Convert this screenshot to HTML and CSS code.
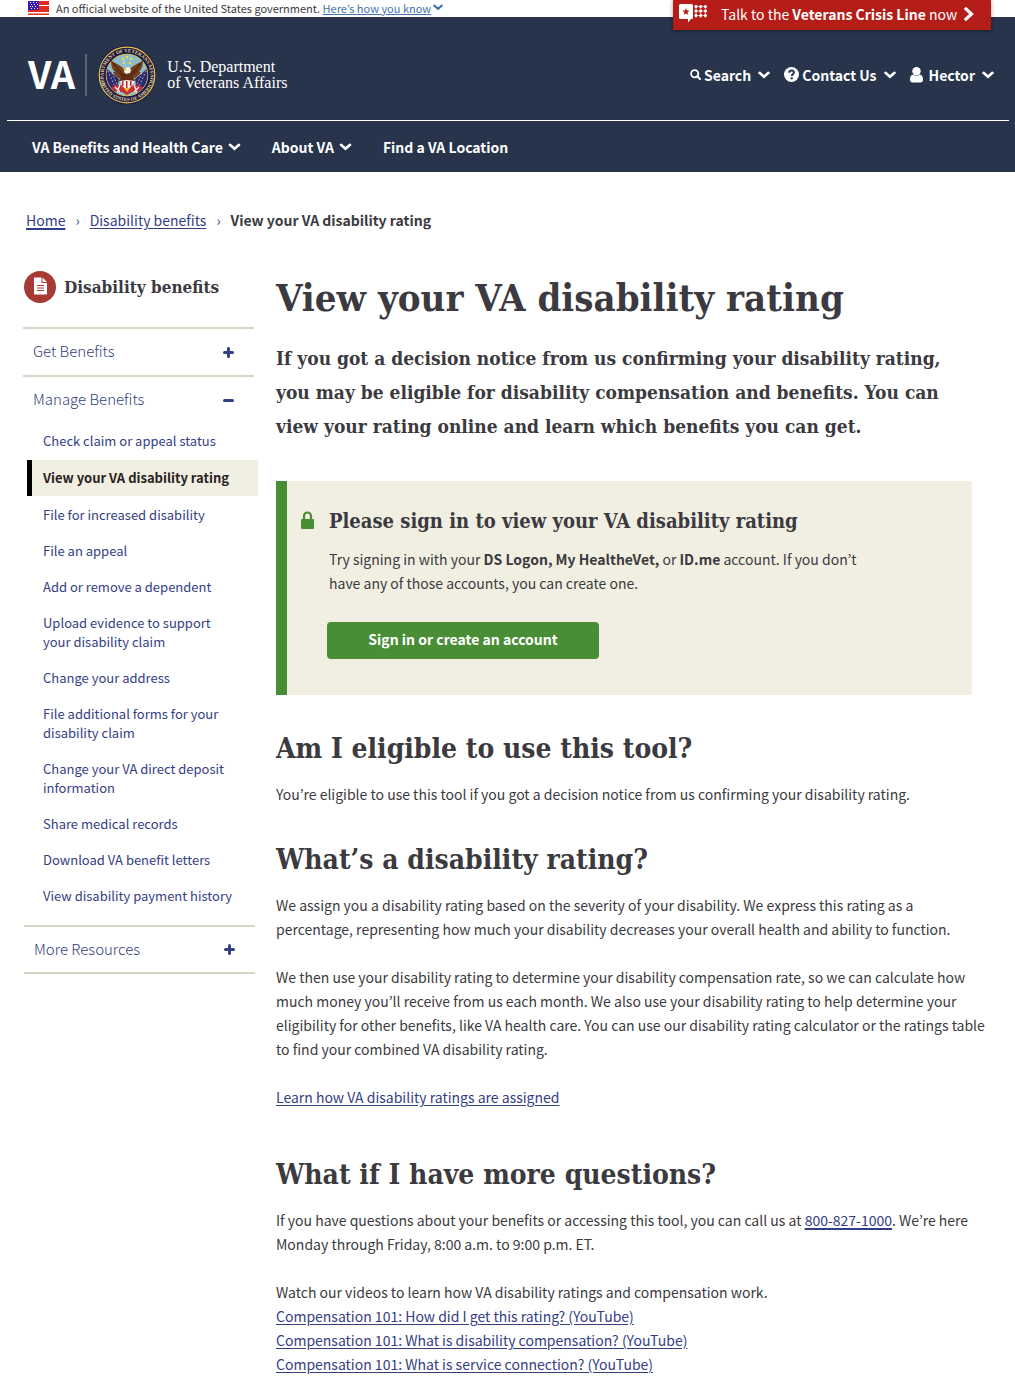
FILE: index.html
```html
<!DOCTYPE html>
<html lang="en">
<head>
<meta charset="utf-8">
<meta name="viewport" content="width=device-width, initial-scale=1">
<title>View your VA disability rating</title>
<link rel="stylesheet" href="styles.css">
</head>
<body>
<svg class="defs" aria-hidden="true">
  <symbol id="chevron" viewBox="0 0 12 8"><path d="M1.500 1.800 6 5.700l4.500-3.900" fill="none" stroke="currentColor" stroke-width="2.600" stroke-linecap="round"/></symbol>
  <symbol id="plus" viewBox="0 0 11 11"><path d="M5.500 1.500v8M1.500 5.500h8" fill="none" stroke="currentColor" stroke-width="3" stroke-linecap="round"/></symbol>
  <symbol id="minus" viewBox="0 0 11 11"><path d="M1.500 5.500h8" fill="none" stroke="currentColor" stroke-width="3" stroke-linecap="round"/></symbol>
</svg>

<div class="gov-banner">
  <svg class="flag" viewBox="0 0 21 14" aria-hidden="true">
    <path fill="#e02d1b" d="M0 0h21v14H0z"/>
    <path fill="#fff" d="M11 4h10v1H11zM0 11h21v1.500H0z"/>
    <path fill="#3a17b5" d="M0 0h11v9H0z"/>
    <path fill="#fff" d="M2 1h1v1H2zM5 1h1v1H5zM8 1h1v1H8zM3 3h1v1H3zM6 3h1v1H6zM9 3h1v1H9zM2 5h1v1H2zM4 5h1v1H4zM7 5h1v1H7zM3 7h1v1H3zM6 7h1v1H6zM9 7h1v1H9z"/>
  </svg>
  <span>An official website of the United States government. <a href="#how">Here’s how you know</a></span>
  <svg class="chev-small"><use href="#chevron"/></svg>
</div>

<header class="site-header">
  <a class="crisis" href="#crisis">
    <svg class="crisis-icon" viewBox="0 0 28 19" aria-hidden="true">
      <path fill="#fff" d="M1.500 0h11Q14 0 14 1.500v12q0 1.500-1.500 1.500H12l-3 3.500V15H1.500Q0 15 0 13.500v-12Q0 0 1.500 0z"/>
      <path fill="#b51d18" d="m7 4 1 2.400 2.600.2-2 1.700.6 2.500L7 9.400l-2.200 1.400.6-2.500-2-1.700L6 6.400z"/>
      <path d="M17 2.500h11.500M17 7h11.500M17 11.500h11.500" stroke="#fff" stroke-width="3.200" stroke-linecap="round" stroke-dasharray="0 4.700"/>
      <path d="M16 2.500h11M16 7h11M16 11.500h11M17 1v13M21.700 1v13M26.400 1v13" stroke="#fff" stroke-width=".6"/>
    </svg>
    <span>Talk to the <b>Veterans Crisis Line</b> now</span>
    <svg class="crisis-arrow" viewBox="0 0 10 14" aria-hidden="true"><path d="m2 2 5.500 5L2 12" fill="none" stroke="#fff" stroke-width="3.200" stroke-linecap="square"/></svg>
  </a>
  <div class="brand-row">
    <a class="brand" href="#home">
      <span class="brand-va">VA</span>
      <svg class="seal" viewBox="0 0 58 60" aria-hidden="true">
        <defs>
          <path id="arc-top" d="M7 39A23.500 23.500 0 1 1 51 39"/>
          <path id="arc-bottom" d="M3.500 38A27 27 0 0 0 54.500 38"/>
          <clipPath id="disc"><circle cx="29" cy="30" r="20.500"/></clipPath>
        </defs>
        <ellipse cx="29" cy="30" rx="28.800" ry="29.600" fill="#1b1740"/>
        <circle cx="29" cy="30" r="27.800" fill="#1d1842" stroke="#e2c44c" stroke-width="1.200"/>
        <text class="seal-text"><textPath href="#arc-top" startOffset="50%" text-anchor="middle">DEPARTMENT OF VETERANS AFFAIRS</textPath></text>
        <text class="seal-text"><textPath href="#arc-bottom" startOffset="50%" text-anchor="middle">UNITED STATES OF AMERICA</textPath></text>
        <circle cx="29" cy="30" r="20.800" fill="#8fbccb" stroke="#d9c25a"/>
        <g clip-path="url(#disc)">
          <path fill="#2c2a68" d="M8 23l13 11-3 16-10-6zM50 23 37 34l3 16 10-6z"/>
          <path d="m10 26 9 20M14 28l8 18M48 26l-9 20M44 28l-8 18" stroke="#e9dfe4" stroke-width=".8" stroke-dasharray="1.500 2"/>
          <path fill="#c92d35" d="M17 40h24l5 3-7 4-5 0-5 3-5-3h-5l-6-4z"/>
          <path d="m17 42 5 5M22 40l-3 7M41 42l-5 5M36 40l3 7" stroke="#fff" stroke-width="1.300"/>
        </g>
        <path fill="#754019" d="M27 26c-3-6-8-6-14-11 0 6 1 9 4 12h-2c2 4 5 6 8 7l-3 1c3 3 6 3 9 3s7-1 9-3l-3-1c4-2 6-4 8-7h-2c3-3 4-7 4-12-6 5-11 5-14 11l-2-1z"/>
        <path d="m15 18 9 10M18 25l7 6M43 18l-9 10M40 25l-7 6" stroke="#371b13" fill="none"/>
        <path fill="#5d2d14" d="M24 28h10l2 8-7 5-7-5z"/>
        <path fill="#f8f2e6" d="m27 23 4-1 2 3-1 3-4 1-2-2zM22 36l7-1 8 1-3 5-5 4-5-4z"/>
        <path fill="#b72730" d="M24 36h1.500v5H24zM28 36h1.500v7H28zM32 36h1.500v5H32z"/>
        <path fill="#efb93d" d="m25 24 3-1v3zM26 43h6l-3 4z"/>
        <g fill="#f1dd4c"><circle cx="29" cy="12" r="1.200"/><circle cx="25" cy="14" r="1.200"/><circle cx="33" cy="14" r="1.200"/><circle cx="26" cy="18" r="1.200"/><circle cx="32" cy="18" r="1.200"/></g>
      </svg>
      <span class="brand-name">U.S. Department<br>of Veterans Affairs</span>
    </a>
    <div class="tools">
      <button type="button" class="tool">
        <svg class="icon-search" viewBox="0 0 11 11" aria-hidden="true"><circle cx="4.700" cy="4.700" r="3.600" fill="none" stroke="#fff" stroke-width="1.800"/><path d="m7.500 7.500 2.500 2.500" stroke="#fff" stroke-width="2" stroke-linecap="round"/></svg>
        Search <svg class="chev"><use href="#chevron"/></svg>
      </button>
      <button type="button" class="tool">
        <svg class="icon-help" viewBox="0 0 15 15" aria-hidden="true"><circle cx="7.500" cy="7.500" r="7.500" fill="#fff"/><path d="M5.200 5.700c.2-3 4.800-2.700 4.700-.1 0 1.600-2.200 1.700-2.200 3.500" fill="none" stroke="#28334c" stroke-width="2"/><path fill="#28334c" d="M6.600 10.300h2.200v2H6.600z"/></svg>
        Contact Us <svg class="chev"><use href="#chevron"/></svg>
      </button>
      <button type="button" class="tool">
        <svg class="icon-user" viewBox="0 0 13 16" aria-hidden="true"><circle cx="6.500" cy="4.200" r="4.200" fill="#fff"/><path fill="#fff" d="M3 7.500c2 1.800 5 1.800 7 0 2.200.5 3 2.500 3 5.500 0 1.500-1 2.500-2.500 2.500h-8C1 15.500 0 14.500 0 13c0-3 .8-5 3-5.500z"/></svg>
        Hector <svg class="chev"><use href="#chevron"/></svg>
      </button>
    </div>
  </div>
  <nav class="main-nav" aria-label="Main">
    <button type="button">VA Benefits and Health Care <svg class="chev"><use href="#chevron"/></svg></button>
    <button type="button">About VA <svg class="chev"><use href="#chevron"/></svg></button>
    <a href="#locations">Find a VA Location</a>
  </nav>
</header>

<nav class="breadcrumbs" aria-label="Breadcrumb">
  <a class="crumb-home" href="#home">Home</a><span class="sep">›</span><a href="#disability">Disability benefits</a><span class="sep">›</span><b>View your VA disability rating</b>
</nav>

<div class="layout">
  <aside class="sidebar">
    <div class="side-title">
      <svg class="side-icon" viewBox="0 0 32 32" aria-hidden="true"><circle cx="16" cy="16" r="16" fill="#a63a34"/><path fill="#fff" d="M10 6.500h7.500v5.500H23v11.500H10zM18.500 6.500 23 11h-4.500z"/><path d="M13 14.500h7M13 17h7M13 19.500h7" stroke="#a63a34"/></svg>
      <h2>Disability benefits</h2>
    </div>
    <button type="button" class="side-toggle">Get Benefits <svg><use href="#plus"/></svg></button>
    <button type="button" class="side-toggle" aria-expanded="true">Manage Benefits <svg><use href="#minus"/></svg></button>
    <ul class="side-list">
      <li><a href="#status">Check claim or appeal status</a></li>
      <li class="current"><a href="#rating" aria-current="page">View your VA disability rating</a></li>
      <li><a href="#increase">File for increased disability</a></li>
      <li><a href="#appeal">File an appeal</a></li>
      <li><a href="#dependent">Add or remove a dependent</a></li>
      <li><a href="#evidence">Upload evidence to support your disability claim</a></li>
      <li><a href="#address">Change your address</a></li>
      <li><a href="#forms">File additional forms for your disability claim</a></li>
      <li><a href="#deposit">Change your VA direct deposit information</a></li>
      <li><a href="#records">Share medical records</a></li>
      <li><a href="#letters">Download VA benefit letters</a></li>
      <li><a href="#payments">View disability payment history</a></li>
    </ul>
    <button type="button" class="side-toggle side-last">More Resources <svg><use href="#plus"/></svg></button>
  </aside>

  <main class="content">
    <h1>View your VA disability rating</h1>
    <p class="intro">If you got a decision notice from us confirming your disability rating, you may be eligible for disability compensation and benefits. You can view your rating online and learn which benefits you can get.</p>
    <section class="signin">
      <svg class="lock" viewBox="0 0 13 18" aria-hidden="true"><path d="M3 9V5a3.500 3.500 0 0 1 7 0v4" fill="none" stroke="#4a8d37" stroke-width="2.200"/><rect y="8" width="13" height="10" rx="1" fill="#4a8d37"/></svg>
      <div class="signin-body">
        <h3>Please sign in to view your VA disability rating</h3>
        <p>Try signing in with your <b>DS Logon, My HealtheVet,</b> or <b>ID.me</b> account. If you don’t have any of those accounts, you can create one.</p>
        <button type="button" class="primary">Sign in or create an account</button>
      </div>
    </section>
    <h2>Am I eligible to use this tool?</h2>
    <p>You’re eligible to use this tool if you got a decision notice from us confirming your disability rating.</p>
    <h2>What’s a disability rating?</h2>
    <p>We assign you a disability rating based on the severity of your disability. We express this rating as a percentage, representing how much your disability decreases your overall health and ability to function.</p>
    <p>We then use your disability rating to determine your disability compensation rate, so we can calculate how much money you’ll receive from us each month. We also use your disability rating to help determine your eligibility for other benefits, like VA health care. You can use our disability rating calculator or the ratings table to find your combined VA disability rating.</p>
    <p><a href="#learn">Learn how VA disability ratings are assigned</a></p>
    <h2 class="questions">What if I have more questions?</h2>
    <p>If you have questions about your benefits or accessing this tool, you can call us at <a class="phone" href="tel:8008271000">800-827-1000</a>. We’re here Monday through Friday, 8:00 a.m. to 9:00 p.m. ET.</p>
    <p>Watch our videos to learn how VA disability ratings and compensation work.<br>
      <a href="#video-1">Compensation 101: How did I get this rating? (YouTube)</a><br>
      <a href="#video-2">Compensation 101: What is disability compensation? (YouTube)</a><br>
      <a href="#video-3">Compensation 101: What is service connection? (YouTube)</a></p>
  </main>
</div>
</body>
</html>
```
FILE: styles.css
```css
* { box-sizing: border-box; }

body {
  margin: 0;
  background: #fff;
  color: #3b3a40;
  font-family: "Noto Sans CJK KR", "Open Sans", sans-serif;
  font-size: 14px;
  line-height: 24px;
}

h1, h2, h3, p, ul { margin: 0; }
h1, h2, h3, .intro { font-family: "DejaVu Serif Condensed", "DejaVu Serif", serif; font-stretch: condensed; font-weight: 700; }
a { color: #343e83; text-underline-offset: 2px; }
button { font: inherit; color: inherit; background: none; border: 0; padding: 0; text-align: left; }
.defs { position: absolute; width: 0; height: 0; }

.gov-banner { display: flex; align-items: center; height: 17px; padding: 0 0 2px 28px; font-size: 11px; line-height: 14px; }
.gov-banner a { color: #4273af; text-underline-offset: 1px; }
.flag { width: 21px; height: 14px; margin-right: 7px; }
.chev-small { width: 10px; height: 7px; margin-left: 2px; color: #4273af; }

.site-header { position: relative; background: #28334c; color: #fff; }
.site-header a { color: #fff; text-decoration: none; }
.crisis {
  position: absolute; top: -17px; right: 24px;
  display: flex; align-items: center;
  width: 318px; height: 30px; padding: 0 0 3px 6px;
  background: #b51d18; box-shadow: 0 1px 4px #0006;
}
.crisis-icon { width: 28px; height: 19px; margin-right: 14px; }
.crisis-arrow { width: 10px; height: 14px; margin: 0 17px 0 auto; }

.brand-row { display: flex; justify-content: space-between; height: 104px; margin: 0 6px 0 7px; padding: 0 15px 0 21px; border-bottom: 1px solid #fff; }
.brand { display: flex; align-items: center; padding-top: 12px; }
.brand-va { display: flex; align-items: center; height: 42px; padding: 0 10px 4px 0; border-right: 2px solid #5c6372; font-size: 38px; font-weight: 700; }
.seal { width: 58px; height: 60px; margin: 0 11px; overflow: visible; }
.seal-text { font-family: "Liberation Serif", serif; font-size: 5px; font-weight: 700; fill: #e3d9a1; }
.brand-name { font-family: "Liberation Serif", serif; font-size: 16px; line-height: 16px; }
.tools { display: flex; align-items: center; gap: 14px; padding-top: 12px; font-weight: 700; }
.tool { display: flex; align-items: center; gap: 3px; }
.tool .chev { margin-left: 4px; }
.chev { width: 12px; height: 8px; }
.icon-search { width: 11px; height: 11px; }
.icon-help { width: 15px; height: 15px; }
.icon-user { width: 13px; height: 16px; margin-right: 3px; }

.main-nav { display: flex; align-items: center; gap: 31px; height: 51px; padding-left: 32px; font-weight: 700; }
.main-nav button { display: flex; align-items: center; gap: 5px; }
.main-nav .chev { width: 13px; }

.breadcrumbs { display: flex; padding: 36px 26px 0; }
.sep { padding: 0 10px; color: #343e83; }

.layout { display: grid; grid-template-columns: 235px minmax(0, 712px); column-gap: 18px; padding: 39px 20px 12px 23px; }
.side-title { display: flex; align-items: center; gap: 8px; height: 32px; margin: 0 0 24px 1px; }
.side-icon { width: 32px; height: 32px; }
.side-title h2 { margin: 0; font-size: 17px; line-height: 24px; }
.side-toggle { display: flex; justify-content: space-between; align-items: center; width: 231px; height: 48px; padding: 0 20px 2px 10px; border-top: 2px solid #d9d6c6; color: #343e83; font-size: 15px; font-weight: 300; }
.side-toggle svg { width: 11px; height: 11px; position: relative; top: 1px; }
.side-list { list-style: none; padding: 0 0 11px 4px; font-size: 13px; line-height: 19px; }
.side-list li { padding: 8px 22px 9px 16px; }
.side-list a { text-decoration: none; }
.side-list .current { margin: 1px 0; padding-left: 11px; border-left: 5px solid #000; background: #f1efe2; font-weight: 700; }
.side-list .current a { color: #29221f; }
.side-last { height: 49px; border-bottom: 2px solid #d9d6c6; margin-left: 1px; }

.content h1 { font-size: 38px; line-height: 54px; }
.intro { max-width: 696px; margin: 16px 0 38px; font-size: 19px; line-height: 34px; }
.content h2 { font-size: 28px; line-height: 40px; margin-bottom: 13px; }
.content p + h2 { margin-top: 34px; }
.content p + h2.questions { margin-top: 46px; }
.content p:not(.intro) + p { margin-top: 24px; }
.phone, .crumb-home { text-decoration-thickness: 2px; }

.signin { display: flex; gap: 15px; max-width: 696px; margin-bottom: 34px; padding: 24px 96px 36px 14px; border-left: 11px solid #4a8d37; background: #f1efe2; }
.lock { flex: none; width: 13px; height: 18px; margin-top: 6px; }
.signin h3 { font-size: 20px; line-height: 32px; margin-bottom: 10px; white-space: nowrap; }
.primary { width: 272px; height: 37px; margin: 27px 0 0 -2px; padding-bottom: 4px; border-radius: 4px; background: #4a8d37; color: #fff; font-weight: 700; text-align: center; }
```
